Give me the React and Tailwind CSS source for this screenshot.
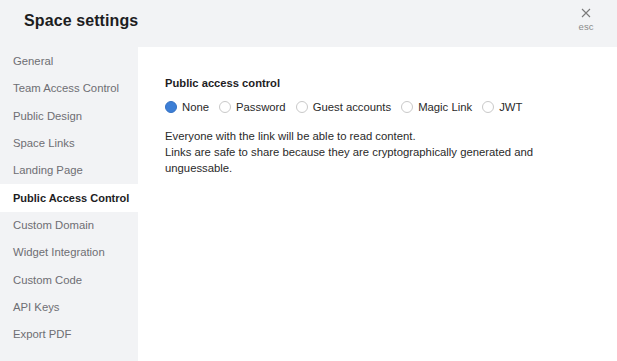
import { useState } from 'react';

const NAV_ITEMS = [
  'General',
  'Team Access Control',
  'Public Design',
  'Space Links',
  'Landing Page',
  'Public Access Control',
  'Custom Domain',
  'Widget Integration',
  'Custom Code',
  'API Keys',
  'Export PDF',
];

const OPTIONS = ['None', 'Password', 'Guest accounts', 'Magic Link', 'JWT'];

const Radio = ({ checked }) =>
  checked ? (
    <span className="w-[12px] h-[12px] rounded-full bg-[#3d7fd6] border border-[#3572c4] flex items-center justify-center">
      <span className="w-[4px] h-[4px] rounded-full bg-[#3d7fd6]"></span>
    </span>
  ) : (
    <span className="w-[12px] h-[12px] rounded-full bg-white border border-[#c9c9c9]"></span>
  );

const App = () => {
  const [selected, setSelected] = useState('None');
  const active = 'Public Access Control';

  return (
    <div className="w-[617px] h-[361px] bg-[#f2f3f5] flex flex-col font-['Liberation_Sans',Arial,sans-serif] text-[#1d1d1f] overflow-hidden">
      <div className="h-[47px] flex items-start justify-between shrink-0">
        <h1 className="text-[16px] font-bold pl-[24px] pt-[11px] leading-[20px] tracking-[0.1px]">
          Space settings
        </h1>
        <div className="w-[40px] mr-[11px] pt-[8px] flex flex-col items-center text-[#8b8b8b]">
          <svg width="10" height="10" viewBox="0 0 10 10" fill="none" stroke="#7a7a7a" strokeWidth="1.1">
            <path d="M1 1L9 9M9 1L1 9" />
          </svg>
          <span className="text-[9.5px] leading-[11px] mt-[3px]">esc</span>
        </div>
      </div>

      <div className="flex flex-1 min-h-0">
        <nav className="w-[138px] shrink-0 flex flex-col pt-[1px]">
          {NAV_ITEMS.map((item) => (
            <div
              key={item}
              className={
                item === active
                  ? 'h-[27.3px] flex items-center pl-[13px] text-[11px] font-bold text-[#1d1d1f] bg-white'
                  : 'h-[27.3px] flex items-center pl-[13px] text-[11.3px] text-[#6e6e73]'
              }
            >
              {item}
            </div>
          ))}
        </nav>

        <main className="flex-1 bg-white pl-[27px] pt-[29px]">
          <h2 className="text-[11.2px] font-bold leading-[14px]">Public access control</h2>
          <div className="flex items-center mt-[10px] text-[11.3px] text-[#2a2a2a]">
            {OPTIONS.map((opt) => (
              <label
                key={opt}
                onClick={() => setSelected(opt)}
                className="flex items-center gap-[5px] mr-[10px] cursor-pointer"
              >
                <Radio checked={selected === opt} />
                <span className="leading-[14px]">{opt}</span>
              </label>
            ))}
          </div>
          <div className="mt-[14px] text-[11.3px] leading-[16px] text-[#2a2a2a]">
            <p>Everyone with the link will be able to read content.</p>
            <p>
              Links are safe to share because they are cryptographically generated and
              <br />
              unguessable.
            </p>
          </div>
        </main>
      </div>
    </div>
  );
};

export default App;
